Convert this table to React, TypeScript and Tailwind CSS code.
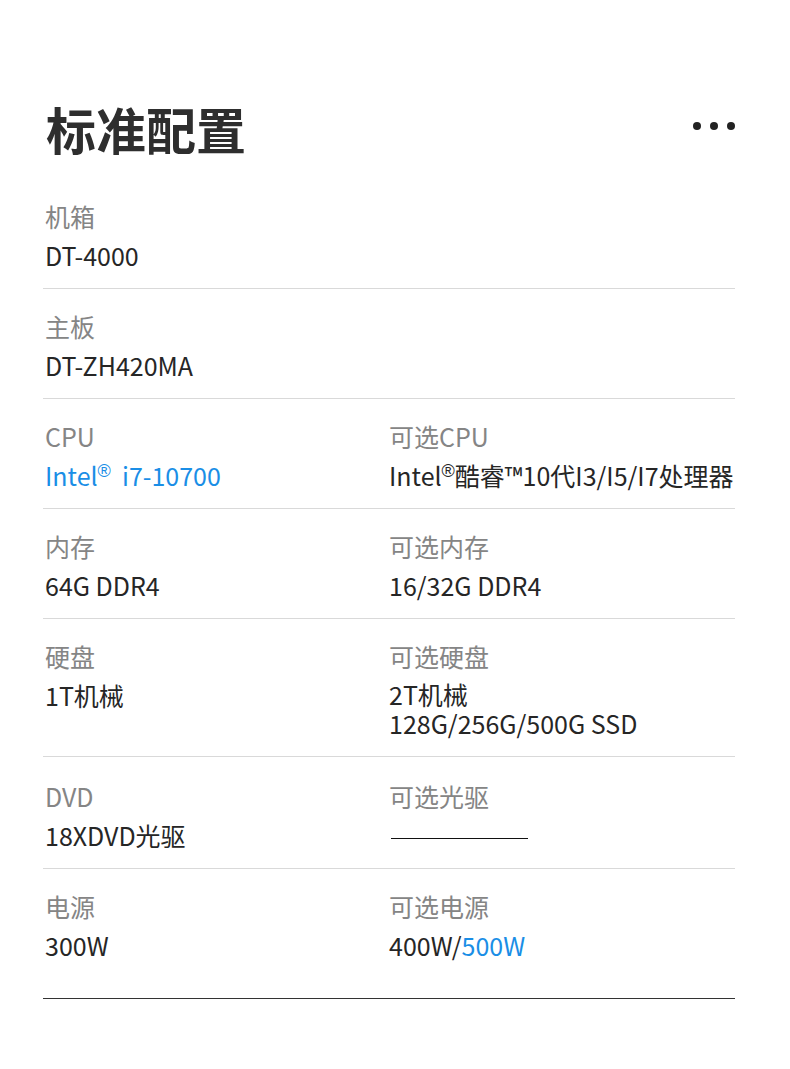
const FONT = { fontFamily: '"Noto Sans CJK SC", "Noto Sans", sans-serif' }

type Spec = { label: string; value: React.ReactNode }

const Reg = () => <sup className="relative -top-[9px] font-['Liberation_Sans'] text-[18px]">®</sup>

const rows: { left: Spec; right?: Spec; tall?: boolean; last?: boolean }[] = [
  { left: { label: '机箱', value: 'DT-4000' } },
  { left: { label: '主板', value: 'DT-ZH420MA' } },
  {
    left: {
      label: 'CPU',
      value: (
        <span className="text-[#1a8ee6]">
          Intel<Reg />&nbsp;&nbsp;i7-10700
        </span>
      ),
    },
    right: {
      label: '可选CPU',
      value: (
        <span className="whitespace-nowrap">
          Intel<Reg />酷睿™10代I3/I5/I7处理器
        </span>
      ),
    },
  },
  { left: { label: '内存', value: '64G DDR4' }, right: { label: '可选内存', value: '16/32G DDR4' } },
  {
    left: { label: '硬盘', value: '1T机械' },
    right: {
      label: '可选硬盘',
      value: (
        <div className="leading-[29px]">
          <div>2T机械</div>
          <div>128G/256G/500G SSD</div>
        </div>
      ),
    },
  },
  {
    left: { label: 'DVD', value: '18XDVD光驱' },
    right: {
      label: '可选光驱',
      value: (
        <div className="flex h-[30px] items-center pl-[2px] pt-[6px]">
          <div className="h-px w-[137px] bg-[#111]" />
        </div>
      ),
    },
    tall: true,
  },
  {
    left: { label: '电源', value: '300W' },
    right: {
      label: '可选电源',
      value: (
        <span>
          400W/<span className="text-[#1a8ee6]">500W</span>
        </span>
      ),
    },
    last: true,
  },
]

function Cell({ spec }: { spec?: Spec }) {
  if (!spec) return <div />
  return (
    <div>
      <div className="text-[25px] leading-[30px] text-[#858585]">{spec.label}</div>
      <div className="mt-[9px] text-[25px] leading-[30px] text-[#262626]">{spec.value}</div>
    </div>
  )
}

export default function App() {
  return (
    <div className="min-h-[1069px] w-[790px] bg-white" style={FONT}>
      <div className="ml-[43px] w-[692px] pt-[96px]">
        <div className="mb-[19px] flex h-[64px] items-center justify-between pl-[3px]">
          <h1 className="text-[50px] font-bold leading-[64px] text-[#2e2e2e]">标准配置</h1>
          <div className="flex items-center gap-[9px] pb-[4px]">
            <span className="h-[8px] w-[8px] rounded-full bg-[#222]" />
            <span className="h-[8px] w-[8px] rounded-full bg-[#222]" />
            <span className="h-[8px] w-[8px] rounded-full bg-[#222]" />
          </div>
        </div>
        {rows.map((r, i) => (
          <div
            key={i}
            className={
              r.last
                ? 'grid grid-cols-2 border-b border-[#333] pb-[38px] pt-[22px]'
                : r.tall
                  ? 'grid grid-cols-2 border-b border-[#d9d9d9] pb-[18px] pt-[24px]'
                  : 'grid grid-cols-2 border-b border-[#d9d9d9] pb-[18px] pt-[22px]'
            }
          >
            <div className="pl-[2px]">
              <Cell spec={r.left} />
            </div>
            <Cell spec={r.right} />
          </div>
        ))}
      </div>
    </div>
  )
}
